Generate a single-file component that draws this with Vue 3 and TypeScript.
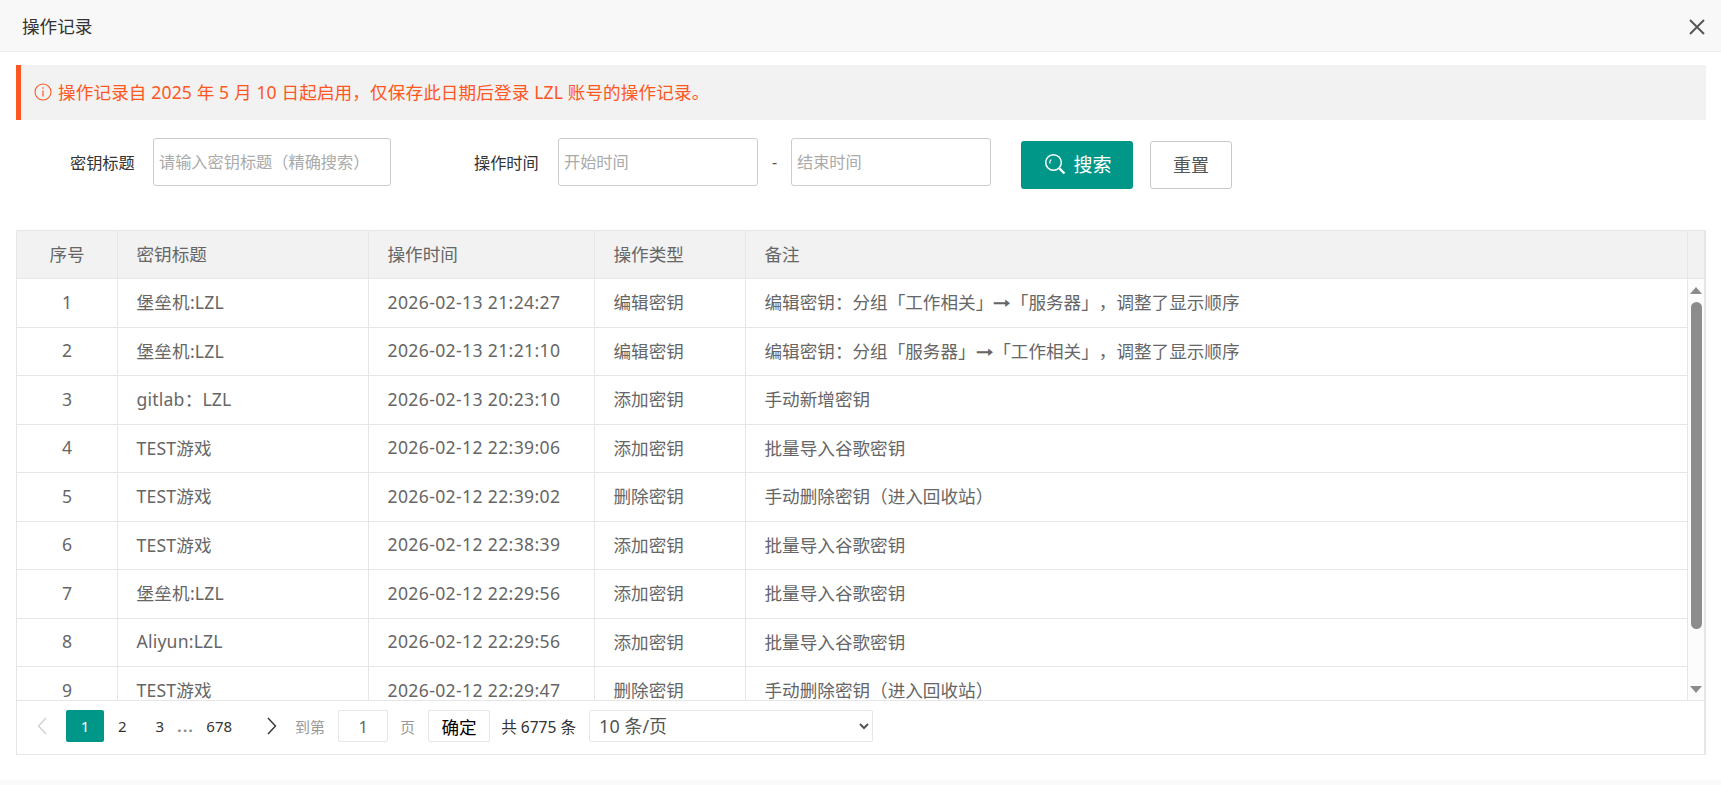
<template>
  <div class="dialog">
    <header class="dialog__title">
      <span>操作记录</span>
      <svg class="dialog__close" viewBox="0 0 16 16" width="16" height="16">
        <path d="M1 1 15 15M15 1 1 15" stroke="#555" stroke-width="1.9" fill="none" />
      </svg>
    </header>

    <div class="dialog__body">
      <div class="notice">
        <svg class="notice__icon" viewBox="0 0 18 18" width="18" height="18">
          <circle cx="9" cy="9" r="8" fill="none" stroke="#ff5722" stroke-width="1.1" />
          <path d="M9 7.6v6M9 4.2v1.6" stroke="#ff5722" stroke-width="1.2" fill="none" />
        </svg>
        <span>操作记录自 2025 年 5 月 10 日起启用，仅保存此日期后登录 LZL 账号的操作记录。</span>
      </div>

      <form class="filters" @submit.prevent>
        <label class="filters__label filters__label--title">密钥标题</label>
        <input class="filters__input filters__input--title" placeholder="请输入密钥标题（精确搜索）" />
        <label class="filters__label filters__label--time">操作时间</label>
        <input class="filters__input filters__input--date" placeholder="开始时间" />
        <span class="filters__dash">-</span>
        <input class="filters__input filters__input--date" placeholder="结束时间" />
        <button class="btn btn--primary" type="button">
          <svg viewBox="0 0 22 22" width="22" height="22">
            <circle cx="9.5" cy="9.5" r="7.8" fill="none" stroke="#fff" stroke-width="1.5" />
            <path d="M5.8 10.5c-.3-1.8.3-3.2 1.5-4" fill="none" stroke="#fff" stroke-width="1.2" />
            <path d="M15.4 15.4 20.5 20.5" stroke="#fff" stroke-width="2.2" fill="none" />
          </svg>
          <span>搜索</span>
        </button>
        <button class="btn btn--plain" type="button">重置</button>
      </form>

      <section class="grid">
        <div class="grid__head">
          <table>
            <colgroup>
              <col v-for="c in columns" :key="c" :style="{ width: c + 'px' }" />
            </colgroup>
            <thead>
              <tr>
                <th class="center">序号</th>
                <th>密钥标题</th>
                <th>操作时间</th>
                <th>操作类型</th>
                <th>备注</th>
              </tr>
            </thead>
          </table>
          <div class="grid__patch"></div>
        </div>

        <div class="grid__main">
          <div class="grid__rows">
            <table>
              <colgroup>
                <col v-for="c in columns" :key="c" :style="{ width: c + 'px' }" />
              </colgroup>
              <tbody>
                <tr v-for="row in rows" :key="row.no">
                  <td class="center">{{ row.no }}</td>
                  <td class="latin">{{ row.title }}</td>
                  <td class="time">{{ row.time }}</td>
                  <td>{{ row.type }}</td>
                  <td>
                    <template v-for="(part, i) in row.note.split('➞')" :key="i">
                      <span v-if="i > 0" class="arrow">➞</span>{{ part }}
                    </template>
                  </td>
                </tr>
              </tbody>
            </table>
          </div>
          <div class="scrollbar">
            <i class="scrollbar__up"></i>
            <i class="scrollbar__thumb"></i>
            <i class="scrollbar__down"></i>
          </div>
        </div>

        <footer class="pager">
          <svg class="pager__arrow" viewBox="0 0 10 18" width="10" height="18">
            <path d="M9 1 1.5 9 9 17" fill="none" stroke="#d2d2d2" stroke-width="1.4" />
          </svg>
          <a class="pager__page pager__page--on">1</a>
          <a class="pager__page pager__page--two">2</a>
          <a class="pager__page pager__page--three">3</a>
          <span class="pager__dots">...</span>
          <a class="pager__page pager__page--last">678</a>
          <svg class="pager__arrow pager__arrow--next" viewBox="0 0 10 18" width="10" height="18">
            <path d="M1 1 8.5 9 1 17" fill="none" stroke="#333" stroke-width="1.4" />
          </svg>
          <span class="pager__muted pager__goto">到第</span>
          <input class="pager__input" value="1" />
          <span class="pager__muted pager__unit">页</span>
          <button class="pager__ok" type="button">确定</button>
          <span class="pager__total">共 6775 条</span>
          <select class="pager__size">
            <option>10 条/页</option>
          </select>
        </footer>
      </section>
    </div>
    <div class="dialog__foot"></div>
  </div>
</template>

<script setup lang="ts">
interface Row {
  no: number;
  title: string;
  time: string;
  type: string;
  note: string;
}

const columns: number[] = [101, 251, 226, 151, 942];

const rows: Row[] = [
  { no: 1, title: "堡垒机:LZL", time: "2026-02-13 21:24:27", type: "编辑密钥", note: "编辑密钥：分组「工作相关」➞「服务器」，调整了显示顺序" },
  { no: 2, title: "堡垒机:LZL", time: "2026-02-13 21:21:10", type: "编辑密钥", note: "编辑密钥：分组「服务器」➞「工作相关」，调整了显示顺序" },
  { no: 3, title: "gitlab：LZL", time: "2026-02-13 20:23:10", type: "添加密钥", note: "手动新增密钥" },
  { no: 4, title: "TEST游戏", time: "2026-02-12 22:39:06", type: "添加密钥", note: "批量导入谷歌密钥" },
  { no: 5, title: "TEST游戏", time: "2026-02-12 22:39:02", type: "删除密钥", note: "手动删除密钥（进入回收站）" },
  { no: 6, title: "TEST游戏", time: "2026-02-12 22:38:39", type: "添加密钥", note: "批量导入谷歌密钥" },
  { no: 7, title: "堡垒机:LZL", time: "2026-02-12 22:29:56", type: "添加密钥", note: "批量导入谷歌密钥" },
  { no: 8, title: "Aliyun:LZL", time: "2026-02-12 22:29:56", type: "添加密钥", note: "批量导入谷歌密钥" },
  { no: 9, title: "TEST游戏", time: "2026-02-12 22:29:47", type: "删除密钥", note: "手动删除密钥（进入回收站）" },
];
</script>

<style>
html,
body {
  margin: 0;
  background: #fff;
}
</style>

<style scoped>
.dialog {
  width: 1721px;
  height: 785px;
  overflow: hidden;
  font-family: "Noto Sans", "Noto Sans CJK SC", sans-serif;
  font-size: 17.6px;
  color: #666;
  text-spacing-trim: space-all;
}

.dialog__title {
  display: flex;
  justify-content: space-between;
  align-items: center;
  box-sizing: border-box;
  height: 52px;
  padding: 0 16px 0 22px;
  background: #f8f8f8;
  border-bottom: 1px solid #eee;
  color: #333;
}

.dialog__close {
  margin-top: 2px;
}

.dialog__body {
  padding: 13px 15px 0 16px;
}

.notice {
  display: flex;
  align-items: center;
  gap: 6px;
  box-sizing: border-box;
  height: 55px;
  padding: 0 0 2px 13px;
  background: #f2f2f2;
  border-left: 5px solid #ff5722;
  color: #ff5722;
  letter-spacing: 0.12px;
}

.filters {
  display: flex;
  align-items: flex-start;
  height: 110px;
  padding-top: 18px;
  box-sizing: border-box;
}

.filters__label {
  width: 66px;
  padding-top: 1px;
  line-height: 48px;
  font-size: 16.2px;
  color: #333;
  white-space: nowrap;
}

.filters__label--title {
  margin-left: 54px;
  margin-right: 17px;
}

.filters__label--time {
  margin-left: 83px;
  margin-right: 18px;
}

.filters__input {
  box-sizing: border-box;
  height: 48px;
  padding: 0 5px;
  border: 1px solid #ccc;
  border-radius: 3px;
  font: inherit;
  font-size: 16.2px;
  outline: none;
}

.filters__input::placeholder {
  color: #aaa;
}

.filters__input--title {
  width: 238px;
}

.filters__input--date {
  width: 200px;
}

.filters__dash {
  width: 33px;
  text-align: center;
  line-height: 48px;
  font-size: 16px;
  color: #555;
}

.btn {
  display: inline-flex;
  align-items: center;
  justify-content: center;
  box-sizing: border-box;
  height: 48px;
  margin-top: 3px;
  padding: 0 0 3px;
  border-radius: 3px;
  font: inherit;
  font-size: 18px;
}

.btn--primary {
  gap: 7px;
  width: 112px;
  margin-left: 30px;
  padding-left: 2px;
  border: 0;
  background: #009688;
  color: #fff;
  font-size: 19px;
}

.btn--plain {
  width: 82px;
  margin-left: 17px;
  border: 1px solid #c9c9c9;
  background: #fff;
  color: #555;
}

.grid {
  box-sizing: border-box;
  width: 1690px;
  height: 525px;
  border: 1px solid #e6e6e6;
  border-right-width: 2px;
}

table {
  border-collapse: separate;
  border-spacing: 0;
  table-layout: fixed;
  width: 1671px;
}

.grid__head {
  display: flex;
  height: 47px;
  background: #f2f2f2;
  border-bottom: 1px solid #e6e6e6;
}

.grid__patch {
  flex: 1;
}

th,
td {
  box-sizing: border-box;
  padding: 0 18.5px;
  border-right: 1px solid #e6e6e6;
  font-weight: 400;
  text-align: left;
  white-space: nowrap;
  overflow: hidden;
}

th {
  height: 47px;
  padding-bottom: 2px;
}

td {
  height: 48.5px;
  padding-bottom: 2px;
  border-bottom: 1px solid #e6e6e6;
}

th.center,
td.center {
  text-align: center;
}

td.latin {
  letter-spacing: 0.2px;
}

td.time {
  letter-spacing: 0.35px;
}

.arrow {
  display: inline-block;
  width: 1em;
  text-align: center;
  font-family: "DejaVu Sans", sans-serif;
  transform: scaleX(1.25);
}

.grid__main {
  display: flex;
  height: 422px;
  border-bottom: 1px solid #e6e6e6;
  box-sizing: border-box;
}

.grid__rows {
  width: 1671px;
  overflow: hidden;
}

.scrollbar {
  flex: 1;
  display: flex;
  flex-direction: column;
  align-items: center;
  background: #fcfcfc;
}

.scrollbar i {
  display: block;
}

.scrollbar__up {
  width: 0;
  height: 0;
  margin-top: 8px;
  border: 6.5px solid transparent;
  border-top: 0;
  border-bottom: 7px solid #8c8c8c;
}

.scrollbar__thumb {
  width: 11px;
  height: 327px;
  margin-top: 8px;
  background: #8c8c8c;
  border-radius: 5.5px;
}

.scrollbar__down {
  width: 0;
  height: 0;
  margin-top: 57px;
  border: 6.5px solid transparent;
  border-bottom: 0;
  border-top: 7px solid #8c8c8c;
}

.pager {
  display: flex;
  align-items: center;
  box-sizing: border-box;
  height: 53px;
  padding: 0 0 3px 20px;
  font-size: 15px;
  color: #333;
}

.pager__page {
  text-align: center;
}

.pager__page--on {
  width: 38px;
  line-height: 32px;
  margin-left: 19px;
  background: #009688;
  color: #fff;
  border-radius: 2px;
}

.pager__page--two {
  margin-left: 14px;
}

.pager__page--three {
  margin-left: 29px;
}

.pager__dots {
  margin-left: 13px;
  letter-spacing: 1.5px;
  font-weight: 700;
  color: #888;
}

.pager__page--last {
  margin-left: 12px;
}

.pager__arrow--next {
  margin-left: 35px;
}

.pager__muted {
  color: #999;
}

.pager__goto {
  margin-left: 18px;
}

.pager__input {
  box-sizing: border-box;
  width: 50px;
  height: 32px;
  margin-left: 13px;
  border: 1px solid #e6e6e6;
  border-radius: 2px;
  text-align: center;
  font: inherit;
  font-size: 16.5px;
  color: #666;
  outline: none;
}

.pager__unit {
  margin-left: 12px;
}

.pager__ok {
  box-sizing: border-box;
  width: 62px;
  height: 32px;
  margin-left: 13px;
  padding: 0;
  border: 1px solid #e6e6e6;
  border-radius: 2px;
  background: #fff;
  font: inherit;
  font-size: 17.6px;
  color: #000;
}

.pager__total {
  margin-left: 11px;
  font-size: 15.6px;
}

.pager__size {
  box-sizing: border-box;
  width: 284px;
  height: 32px;
  margin-left: 13px;
  padding-left: 5px;
  border: 1px solid #e6e6e6;
  border-radius: 2px;
  background: #fff;
  font: inherit;
  font-size: 18px;
  color: #555;
}

.dialog__foot {
  height: 6px;
  margin-top: 25px;
  background: #fafafa;
}
</style>
